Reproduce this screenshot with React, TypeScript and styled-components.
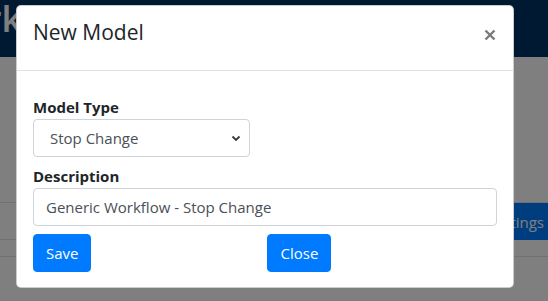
import React from 'react';
import styled, { createGlobalStyle } from 'styled-components';

const GlobalStyle = createGlobalStyle`
	html, body {
		margin: 0;
		padding: 0;
		width: 548px;
		height: 301px;
		overflow: hidden;
		background: #ffffff;
		font-family: 'Open Sans', 'Noto Sans', sans-serif;
		color: #212529;
	}
	* {
		box-sizing: border-box;
	}
`;

const Page = styled.div`
	width: 548px;
	height: 301px;
	overflow: hidden;
	position: relative;
	background: #ffffff;
`;

const NavBar = styled.div`
	height: 57px;
	background: #003366;
	display: flex;
	align-items: flex-start;
	overflow: hidden;
`;

const Brand = styled.div`
	font-size: 36px;
	line-height: 36px;
	font-weight: 600;
	color: #ffffff;
	margin-left: -70px;
	padding-top: 1px;
	white-space: nowrap;
`;

const Content = styled.div`
	padding-top: 145px;
`;

const Toolbar = styled.div`
	height: 38px;
	border-top: 1px solid #dee2e6;
	border-bottom: 1px solid #dee2e6;
	display: flex;
	justify-content: flex-end;
	align-items: stretch;
`;

const Divider = styled.div`
	margin-top: 16px;
	border-top: 1px solid #dee2e6;
`;

const Backdrop = styled.div`
	position: absolute;
	inset: 0;
	background: rgba(0, 0, 0, 0.5);
`;

const Dialog = styled.div`
	position: absolute;
	top: 5px;
	left: 16px;
	width: 498px;
	background: #ffffff;
	border: 1px solid rgba(0, 0, 0, 0.2);
	border-radius: 5px;
	display: flex;
	flex-direction: column;
`;

const Header = styled.div`
	height: 65px;
	padding: 11px 16px 0 16px;
	display: flex;
	align-items: flex-start;
	justify-content: space-between;
	border-bottom: 1px solid #dee2e6;
`;

const Title = styled.h5`
	margin: 0;
	font-size: 21px;
	font-weight: 500;
	line-height: 30px;
	color: #212529;
`;

const CloseX = styled.button`
	border: 0;
	background: transparent;
	padding: 0;
	margin: 11px 0 0 0;
	width: 14px;
	height: 14px;
	display: flex;
	align-items: center;
	justify-content: center;
	cursor: pointer;
`;

const Body = styled.div`
	padding: 25px 16px 15px 16px;
	display: flex;
	flex-direction: column;
`;

const Label = styled.label`
	display: block;
	font-size: 15px;
	line-height: 23px;
	font-weight: 700;
	color: #212529;
`;

const Field = styled.div<{ $width?: number }>`
	width: ${(p) => (p.$width ? `${p.$width}px` : '100%')};
	height: 38px;
	border: 1px solid #ced4da;
	border-radius: 4px;
	display: flex;
	align-items: center;
	justify-content: space-between;
	font-size: 15px;
	color: #495057;
	padding: 0 8px 0 12px;
	margin-bottom: 8px;
`;

const SelectText = styled.span`
	padding-left: 4px;
`;

const Actions = styled.div`
	display: flex;
	gap: 176px;
`;

const Button = styled.button`
	height: 38px;
	padding: 0 12px;
	border: 1px solid #007bff;
	border-radius: 4px;
	background: #007bff;
	color: #ffffff;
	font-family: inherit;
	font-size: 15px;
	line-height: 24px;
	cursor: pointer;
`;

const SettingsButton = styled(Button)`
	border-radius: 0;
	margin-right: -9px;
	height: 37px;
`;

const Chevron = () => (
	<svg width="10" height="8" viewBox="0 0 10 8">
		<path d="M1.5 2.5 L5 6 L8.5 2.5" fill="none" stroke="#343a40" strokeWidth="1.8" />
	</svg>
);

const CrossIcon = () => (
	<svg width="12" height="12" viewBox="0 0 12 12">
		<path d="M1.5 1.5 L10.5 10.5 M10.5 1.5 L1.5 10.5" stroke="#7a7a7a" strokeWidth="2.4" />
	</svg>
);

const App = () => (
	<Page>
		<GlobalStyle />
		<NavBar>
			<Brand>Workflow</Brand>
		</NavBar>
		<Content>
			<Toolbar>
				<SettingsButton type="button">Settings</SettingsButton>
			</Toolbar>
			<Divider />
		</Content>
		<Backdrop />
		<Dialog>
			<Header>
				<Title>New Model</Title>
				<CloseX type="button" aria-label="Close">
					<CrossIcon />
				</CloseX>
			</Header>
			<Body>
				<Label>Model Type</Label>
				<Field $width={217}>
					<SelectText>Stop Change</SelectText>
					<Chevron />
				</Field>
				<Label>Description</Label>
				<Field>Generic Workflow - Stop Change</Field>
				<Actions>
					<Button type="button">Save</Button>
					<Button type="button">Close</Button>
				</Actions>
			</Body>
		</Dialog>
	</Page>
);

export default App;
